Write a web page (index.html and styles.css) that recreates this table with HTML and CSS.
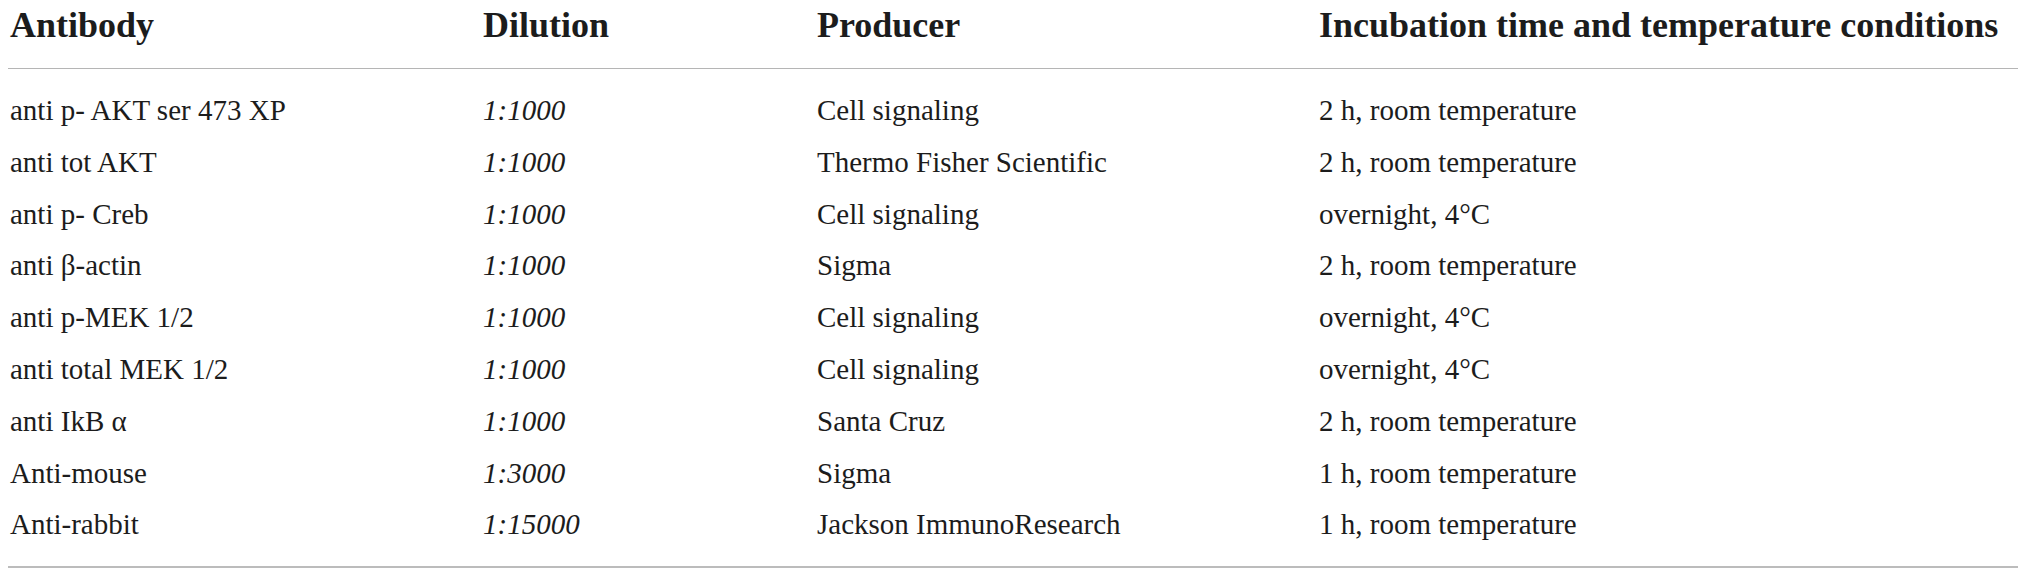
FILE: index.html
```html
<!DOCTYPE html>
<html lang="en">
<head>
<meta charset="utf-8">
<title>Antibodies</title>
<link rel="stylesheet" href="styles.css">
</head>
<body>
<table class="tbl">
  <colgroup>
    <col class="c1"><col class="c2"><col class="c3"><col class="c4">
  </colgroup>
  <thead>
    <tr>
      <th>Antibody</th>
      <th>Dilution</th>
      <th>Producer</th>
      <th>Incubation time and temperature conditions</th>
    </tr>
  </thead>
  <tbody>
    <tr class="first"><td>anti p- AKT ser 473 XP</td><td class="dil">1:1000</td><td>Cell signaling</td><td>2 h, room temperature</td></tr>
    <tr><td>anti tot AKT</td><td class="dil">1:1000</td><td>Thermo Fisher Scientific</td><td>2 h, room temperature</td></tr>
    <tr><td>anti p- Creb</td><td class="dil">1:1000</td><td>Cell signaling</td><td>overnight, 4°C</td></tr>
    <tr><td>anti β-actin</td><td class="dil">1:1000</td><td>Sigma</td><td>2 h, room temperature</td></tr>
    <tr><td>anti p-MEK 1/2</td><td class="dil">1:1000</td><td>Cell signaling</td><td>overnight, 4°C</td></tr>
    <tr><td>anti total MEK 1/2</td><td class="dil">1:1000</td><td>Cell signaling</td><td>overnight, 4°C</td></tr>
    <tr><td>anti IkB α</td><td class="dil">1:1000</td><td>Santa Cruz</td><td>2 h, room temperature</td></tr>
    <tr><td>Anti-mouse</td><td class="dil">1:3000</td><td>Sigma</td><td>1 h, room temperature</td></tr>
    <tr class="last"><td>Anti-rabbit</td><td class="dil">1:15000</td><td>Jackson ImmunoResearch</td><td>1 h, room temperature</td></tr>
  </tbody>
</table>
</body>
</html>
```

FILE: styles.css
```css
html, body {
  background: #ffffff;
}
body {
  margin: 3px 8px 0 8px;
  font-family: "Liberation Serif", "Times New Roman", serif;
  color: #1c1c1c;
}
.tbl {
  width: 2010px;
  table-layout: fixed;
  border-collapse: collapse;
  border-bottom: 2px solid #bcbcbc;
}
.c1 { width: 473px; }
.c2 { width: 334px; }
.c3 { width: 502px; }
.tbl th {
  text-align: left;
  font-weight: bold;
  font-size: 36px;
  line-height: 45px;
  padding: 0 0 20px 2px;
  border-bottom: 1px solid #b5b5b5;
  white-space: nowrap;
}
.tbl td {
  font-size: 29px;
  line-height: 51.8px;
  padding: 0 0 0 2px;
  white-space: nowrap;
  vertical-align: top;
}
.tbl tr.first td {
  padding-top: 16px;
}
.tbl tr.last td {
  padding-bottom: 15px;
}
.tbl td.dil {
  font-style: italic;
}
```
